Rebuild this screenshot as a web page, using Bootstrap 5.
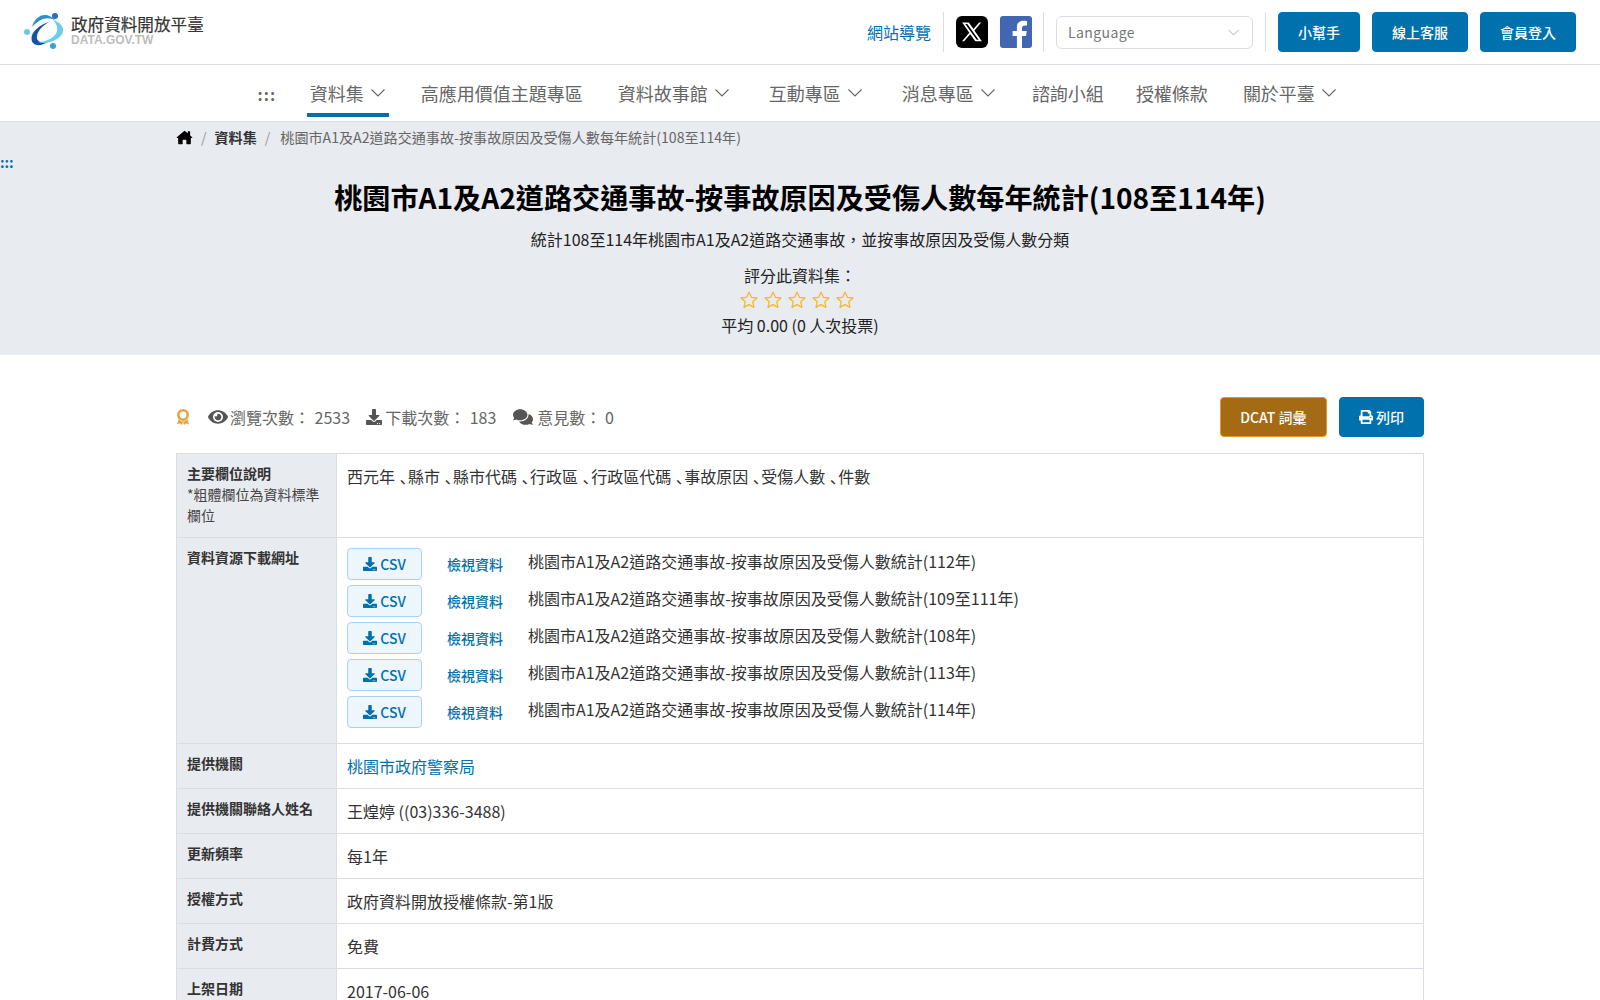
<!DOCTYPE html>
<html lang="zh-Hant">
<head>
    <meta charset="UTF-8">
    <meta name="viewport" content="width=device-width, initial-scale=1.0">
    <title>桃園市A1及A2道路交通事故-按事故原因及受傷人數每年統計(108至114年)</title>
    <link href="https://cdn.jsdelivr.net/npm/bootstrap@5.3.0/dist/css/bootstrap.min.css" rel="stylesheet">
    <style>
        body {
            font-family: "Noto Sans CJK TC", "Noto Sans", sans-serif;
            font-size: 16px;
            color: #222;
            background: #fff;
        }
        a { text-decoration: none; color: #0071ad; }
        .ico { fill: currentColor; display: inline-block; vertical-align: -2px; }

        /* top bar */
        .top-bar { height: 65px; border-bottom: 1px solid #dadde5; padding: 0 24px 0 23px; }
        .logo-box { margin-top: -3px; }
        .logo-mark { margin-right: 6px; }
        .logo-name { font-size: 16.6px; line-height: 19px; color: #333; font-weight: 400; -webkit-text-stroke: .2px #333; }
        .logo-url { font-family: "Liberation Sans", sans-serif; font-size: 12px; line-height: 13px; font-weight: 700; color: #bdbdbd; }
        .top-sep { width: 1px; height: 40px; background: #dadde5; }
        .site-guide { margin-left: 1px; margin-right: 12px; }
        .fb-link { margin-left: 8px; margin-right: 7px; }
        .lang-select {
            width: 197px; height: 33px; padding: 0 11px; margin: 0 12px; font-size: 14px; color: #777; letter-spacing: .4px;
            border-color: #dadde5;
            background-image: url("data:image/svg+xml,%3csvg xmlns='http://www.w3.org/2000/svg' viewBox='0 0 16 16'%3e%3cpath fill='none' stroke='%23aaa' stroke-width='1.2' d='M2 5l6 6 6-6'/%3e%3c/svg%3e");
            background-size: 13px 13px;
        }
        .btn-site {
            background: #0071ad; border: 1px solid #0071ad; color: #fff; font-size: 14px; font-weight: 500;
            height: 40px; padding: 0 19px; border-radius: 4px; display: inline-flex; align-items: center;
        }
        .btn-site:hover { background: #005f91; color: #fff; }

        /* main menu */
        .main-menu { height: 57px; border-bottom: 1px solid #dadde5; padding-left: 12px; }
        .menu-dots { color: #666; font-size: 16px; font-weight: 700; letter-spacing: 1px; margin-right: 16px; padding-top: 2px; }
        .menu-item { position: relative; height: 56px; padding: 15px 3px 0; margin: 0 14.5px; font-size: 18px; color: #666; white-space: nowrap; }
        .menu-item svg { margin-left: 2px; vertical-align: 0; }
        .menu-item.is-active::after { content: ""; position: absolute; left: 0; right: 0; bottom: 4px; height: 4px; background: #0071ad; }
        .menu-item.wide-gap { margin-right: 18.5px; }
        .menu-item.mid-gap { margin-right: 15.5px; }
        .menu-item.tight-gap { margin-right: 11.5px; }

        /* title band */
        .title-band { background: #e8ebf0; height: 233px; text-align: center; }
        .page-wrap { width: 1248px; margin: 0 auto; }
        .crumbs { height: 31px; font-size: 14.1px; color: #666; text-align: left; }
        .crumbs .sep { color: #999; margin: 0 8px; }
        .crumbs .sep-last { margin-right: 10px; }
        .crumbs b { color: #333; font-weight: 700; }
        .crumb-home { color: #000; }
        .skip-dots { display: block; height: 19px; line-height: 19px; text-align: left; font-size: 14px; font-weight: 700; color: #0071ad; }
        .data-title { font-size: 28.13px; line-height: 44px; font-weight: 700; color: #000; margin: 3px 0 8px; }
        .data-sub { font-size: 16px; line-height: 24px; color: #222; margin-bottom: 12px; }
        .rate-line { font-size: 16px; line-height: 24px; color: #222; }
        .star-row { height: 26px; padding: 3px 6px 0 0; }
        .star-row svg { margin: 0 2.1px; }

        /* stats */
        .stats-row { height: 40px; margin: 42px 0 16px; color: #666; font-size: 16px; }
        .stat-ico { color: #555; margin-right: 2px; }
        .stat-ico.ico-dl { margin-right: 3px; }
        .stat-ico.ico-talk { margin-right: 4px; }
        .stat-medal { margin-right: 18px; }
        .stat-gap { margin-right: 17px; }
        .stat-gap.first-gap { margin-right: 16px; }
        .stat-num { margin-left: 1px; }
        .btn-dcat { background: #a56a14; border-color: #e0992f; padding: 0 19.5px; margin-right: 4px; }
        .btn-dcat:hover { background: #8d5a10; }
        .btn-print { gap: 3px; }

        /* info table */
        .info-table { border-collapse: collapse; width: 100%; margin: 0; }
        .info-table th, .info-table td { border: 1px solid #dadde5; vertical-align: top; }
        .info-table th {
            width: 160px; background: #e8ebf0; padding: 9px 10px 11px 10px; font-size: 14px; line-height: 21px;
            font-weight: 700; color: #333;
        }
        .info-table th span { display: block; font-weight: 400; color: #444; }
        .info-table td { padding: 10px; font-size: 16px; line-height: 24px; color: #333; }
        .info-table .row-one { height: 45px; }
        .dun-mark { margin-left: 5px; }
        .res-row { height: 37px; }
        .btn-csv {
            width: 75px; height: 32px; padding: 0; background: #edf5fd; border: 1px solid #a9d3f5; color: #0071ad;
            font-size: 14px; font-weight: 500; border-radius: 4px; display: inline-flex; align-items: center; justify-content: center; gap: 3px;
        }
        .view-link { width: 81px; margin-left: 25px; font-size: 14px; font-weight: 500; padding-top: 4px; }
        .res-name { color: #333; padding-top: 1px; }
    </style>
</head>
<body>
    <svg width="0" height="0" class="position-absolute">
        <symbol id="i-download" viewBox="0 0 512 512"><path d="M216 0h80c13.3 0 24 10.7 24 24v168h87.7c17.8 0 26.7 21.5 14.1 34.1L269.7 378.3c-7.5 7.5-19.8 7.5-27.3 0L90.1 226.1c-12.6-12.6-3.7-34.1 14.1-34.1H192V24c0-13.3 10.7-24 24-24zm296 376v112c0 13.3-10.7 24-24 24H24c-13.3 0-24-10.7-24-24V376c0-13.3 10.7-24 24-24h146.7l49 49c20.1 20.1 52.5 20.1 72.6 0l49-49H488c13.3 0 24 10.7 24 24zm-124 88c0-11-9-20-20-20s-20 9-20 20 9 20 20 20 20-9 20-20zm64 0c0-11-9-20-20-20s-20 9-20 20 9 20 20 20 20-9 20-20z"/></symbol>
        <symbol id="i-eye" viewBox="0 0 576 512"><path d="M572.52 241.4C518.29 135.59 410.93 64 288 64S57.68 135.64 3.48 241.41a32.35 32.35 0 0 0 0 29.19C57.71 376.41 165.07 448 288 448s230.32-71.64 284.52-177.41a32.35 32.35 0 0 0 0-29.19zM288 400a144 144 0 1 1 144-144 143.93 143.93 0 0 1-144 144zm0-240a95.31 95.31 0 0 0-25.31 3.79 47.85 47.85 0 0 1-66.9 66.9A95.78 95.78 0 1 0 288 160z"/></symbol>
        <symbol id="i-comments" viewBox="0 0 576 512"><path d="M416 192c0-88.4-93.1-160-208-160S0 103.6 0 192c0 34.3 14.1 65.9 38 92-13.4 30.2-35.5 54.2-35.8 54.5-2.2 2.3-2.8 5.7-1.5 8.7S4.8 352 8 352c36.6 0 66.9-12.3 88.7-25 32.2 15.7 70.3 25 111.3 25 114.9 0 208-71.6 208-160zm122 220c23.9-26 38-57.7 38-92 0-66.9-53.5-124.2-129.3-148.1.9 6.6 1.3 13.3 1.3 20.1 0 105.9-107.7 192-240 192-10.8 0-21.3-.8-31.7-1.9C207.8 439.6 281.8 480 368 480c41 0 79.1-9.2 111.3-25 21.8 12.7 52.1 25 88.7 25 3.2 0 6.1-1.9 7.3-4.8 1.3-2.9.7-6.3-1.5-8.7-.3-.3-22.4-24.2-35.8-54.5z"/></symbol>
        <symbol id="i-print" viewBox="0 0 512 512"><path d="M448 192V77.25c0-8.49-3.37-16.62-9.37-22.63L393.37 9.37c-6-6-14.14-9.37-22.63-9.37H96C78.33 0 64 14.33 64 32v160c-35.35 0-64 28.65-64 64v112c0 8.84 7.16 16 16 16h48v96c0 17.67 14.33 32 32 32h320c17.67 0 32-14.33 32-32v-96h48c8.84 0 16-7.16 16-16V256c0-35.35-28.65-64-64-64zm-64 256H128v-96h256v96zm0-224H128V64h192v48c0 8.84 7.16 16 16 16h48v96zm48 72c-13.25 0-24-10.75-24-24 0-13.26 10.75-24 24-24s24 10.74 24 24c0 13.25-10.75 24-24 24z"/></symbol>
        <symbol id="i-home" viewBox="0 0 576 512"><path d="M288 28L24 250c-9 8-3 22 8 22h40v192c0 13 11 24 24 24h112c9 0 16-7 16-16V352c0-9 7-16 16-16h96c9 0 16 7 16 16v120c0 9 7 16 16 16h112c13 0 24-11 24-24V272h40c11 0 17-14 8-22l-72-61V56c0-9-7-16-16-16h-48c-9 0-16 7-16 16v52z"/></symbol>
        <symbol id="i-chev" viewBox="0 0 16 16"><path fill="none" stroke="#666" stroke-width="1.1" d="M1.5 4.5L8 11l6.5-6.5"/></symbol>
        <symbol id="i-star" viewBox="0 0 24 24"><path fill="none" stroke="#f5b92f" stroke-width="1.6" stroke-linejoin="round" d="M12 2.600l2.900 6.200 6.700.8-5 4.600 1.400 6.700-6-3.400-6 3.400 1.400-6.700-5-4.600 6.700-.8z"/></symbol>
    </svg>

    <header class="top-bar d-flex align-items-center justify-content-between">
        <a href="#" class="logo-box d-flex align-items-center">
            <svg width="42" height="38" viewBox="0 0 42 38" class="logo-mark">
                <path d="M9 15C12 3 24-2 33 9 26 4 17 6 9 15z" fill="#2b8fd0"/>
                <path d="M28 9C16 13 8 20 8.500 27 9 34 17 35 25 30 18 32 13 29 14 24 15 18 20 13 28 9z" fill="#16539f"/>
                <path d="M30 8c8 2 11 8 10 12-2 7-14 13-26 10 10 0 19-5 20-11 1-4-1-8-4-11z" fill="#6fcbea"/>
                <circle cx="32" cy="4" r="3" fill="#2a6fc0"/>
                <circle cx="4" cy="20" r="3" fill="#6fc4ea"/>
                <circle cx="30" cy="34" r="3" fill="#3aa0dc"/>
            </svg>
            <span class="d-block">
                <span class="logo-name d-block">政府資料開放平臺</span>
                <span class="logo-url d-block">DATA.GOV.TW</span>
            </span>
        </a>
        <div class="d-flex align-items-center">
            <a href="#" class="site-guide">網站導覽</a>
            <span class="top-sep"></span>
            <a href="#" class="d-block ms-2 ps-1" aria-label="X">
                <svg width="32" height="32" viewBox="0 0 32 32" class="d-block"><rect width="32" height="32" rx="6" fill="#000"/><path fill="#fff" d="M6.200 6.500h6.600l4.700 6.500 5.600-6.500h2.100l-6.800 7.900 7.500 10.900h-6.600l-5.100-7.100-6.100 7.100H6l7.300-8.500zm3.100 1.500l11.400 15.800h1.900L11.300 8z"/></svg>
            </a>
            <a href="#" class="d-block fb-link" aria-label="Facebook">
                <svg width="32" height="32" viewBox="0 0 32 32" class="d-block ms-1 me-1"><rect width="32" height="32" rx="3" fill="#4267b2"/><path fill="#fff" d="M22 32V20h4l.7-5H22v-3c0-1.500.7-2.600 2.800-2.600H27V5.100C26.200 5 24.800 4.800 23.300 4.800c-3.900 0-6.400 2.300-6.400 6.600V15h-4.300v5h4.300v12z"/></svg>
            </a>
            <span class="top-sep"></span>
            <select class="form-select lang-select" aria-label="Language">
                <option>Language</option>
            </select>
            <span class="top-sep"></span>
            <div class="d-flex gap-2 ms-2 ps-1">
                <a href="#" class="btn-site me-1">小幫手</a>
                <a href="#" class="btn-site me-1">線上客服</a>
                <a href="#" class="btn-site">會員登入</a>
            </div>
        </div>
    </header>

    <nav class="main-menu d-flex justify-content-center">
        <span class="menu-dots d-flex align-items-center">:::</span>
        <a href="#" class="menu-item is-active">資料集 <svg class="ico" width="16" height="16"><use href="#i-chev"/></svg></a>
        <a href="#" class="menu-item">高應用價值主題專區</a>
        <a href="#" class="menu-item wide-gap">資料故事館 <svg class="ico" width="16" height="16"><use href="#i-chev"/></svg></a>
        <a href="#" class="menu-item wide-gap">互動專區 <svg class="ico" width="16" height="16"><use href="#i-chev"/></svg></a>
        <a href="#" class="menu-item mid-gap">消息專區 <svg class="ico" width="16" height="16"><use href="#i-chev"/></svg></a>
        <a href="#" class="menu-item tight-gap">諮詢小組</a>
        <a href="#" class="menu-item">授權條款</a>
        <a href="#" class="menu-item">關於平臺 <svg class="ico" width="16" height="16"><use href="#i-chev"/></svg></a>
    </nav>

    <section class="title-band">
        <div class="page-wrap">
            <div class="crumbs d-flex align-items-center">
                <svg class="ico crumb-home" width="17" height="15"><use href="#i-home"/></svg>
                <span class="sep">/</span><b>資料集</b><span class="sep sep-last">/</span><span>桃園市A1及A2道路交通事故-按事故原因及受傷人數每年統計(108至114年)</span>
            </div>
        </div>
        <a href="#" class="skip-dots">:::</a>
        <h1 class="data-title">桃園市A1及A2道路交通事故-按事故原因及受傷人數每年統計(108至114年)</h1>
        <p class="data-sub">統計108至114年桃園市A1及A2道路交通事故，並按事故原因及受傷人數分類</p>
        <div class="rate-line">評分此資料集：</div>
        <div class="star-row d-flex justify-content-center">
            <svg width="20" height="20"><use href="#i-star"/></svg>
            <svg width="20" height="20"><use href="#i-star"/></svg>
            <svg width="20" height="20"><use href="#i-star"/></svg>
            <svg width="20" height="20"><use href="#i-star"/></svg>
            <svg width="20" height="20"><use href="#i-star"/></svg>
        </div>
        <div class="rate-line">平均 0.00 (0 人次投票)</div>
    </section>

    <main class="page-wrap">
        <div class="stats-row d-flex align-items-center justify-content-between">
            <div class="d-flex align-items-center">
                <svg width="14" height="16" viewBox="0 0 14 16" class="stat-medal"><circle cx="7" cy="6" r="4.700" fill="none" stroke="#e9a23b" stroke-width="2.600"/><path fill="#e9a23b" d="M2.500 10.500L1 15l3-.6L6 16l1-3 1 3 2-1.600 3 .6-1.500-4.500-3 2H5.500z"/></svg>
                <svg class="ico stat-ico" width="20" height="18"><use href="#i-eye"/></svg>
                <span class="stat-gap first-gap">瀏覽次數： <span class="stat-num">2533</span></span>
                <svg class="ico stat-ico ico-dl" width="16" height="16"><use href="#i-download"/></svg>
                <span class="stat-gap">下載次數： <span class="stat-num">183</span></span>
                <svg class="ico stat-ico ico-talk" width="20" height="18"><use href="#i-comments"/></svg>
                <span>意見數： 0</span>
            </div>
            <div class="d-flex gap-2">
                <a href="#" class="btn-site btn-dcat">DCAT 詞彙</a>
                <a href="#" class="btn-site btn-print"><svg class="ico" width="14" height="14"><use href="#i-print"/></svg>列印</a>
            </div>
        </div>

        <table class="info-table">
            <tr>
                <th>主要欄位說明<span>*粗體欄位為資料標準欄位</span></th>
                <td>西元年<span class="dun-mark">､</span>縣市<span class="dun-mark">､</span>縣市代碼<span class="dun-mark">､</span>行政區<span class="dun-mark">､</span>行政區代碼<span class="dun-mark">､</span>事故原因<span class="dun-mark">､</span>受傷人數<span class="dun-mark">､</span>件數</td>
            </tr>
            <tr>
                <th>資料資源下載網址</th>
                <td>
                    <div class="res-row d-flex">
                        <a href="#" class="btn-csv"><svg class="ico" width="14" height="14"><use href="#i-download"/></svg>CSV</a>
                        <a href="#" class="view-link">檢視資料</a>
                        <span class="res-name">桃園市A1及A2道路交通事故-按事故原因及受傷人數統計(112年)</span>
                    </div>
                    <div class="res-row d-flex">
                        <a href="#" class="btn-csv"><svg class="ico" width="14" height="14"><use href="#i-download"/></svg>CSV</a>
                        <a href="#" class="view-link">檢視資料</a>
                        <span class="res-name">桃園市A1及A2道路交通事故-按事故原因及受傷人數統計(109至111年)</span>
                    </div>
                    <div class="res-row d-flex">
                        <a href="#" class="btn-csv"><svg class="ico" width="14" height="14"><use href="#i-download"/></svg>CSV</a>
                        <a href="#" class="view-link">檢視資料</a>
                        <span class="res-name">桃園市A1及A2道路交通事故-按事故原因及受傷人數統計(108年)</span>
                    </div>
                    <div class="res-row d-flex">
                        <a href="#" class="btn-csv"><svg class="ico" width="14" height="14"><use href="#i-download"/></svg>CSV</a>
                        <a href="#" class="view-link">檢視資料</a>
                        <span class="res-name">桃園市A1及A2道路交通事故-按事故原因及受傷人數統計(113年)</span>
                    </div>
                    <div class="res-row d-flex">
                        <a href="#" class="btn-csv"><svg class="ico" width="14" height="14"><use href="#i-download"/></svg>CSV</a>
                        <a href="#" class="view-link">檢視資料</a>
                        <span class="res-name">桃園市A1及A2道路交通事故-按事故原因及受傷人數統計(114年)</span>
                    </div>
                </td>
            </tr>
            <tr class="row-one"><th>提供機關</th><td><a href="#">桃園市政府警察局</a></td></tr>
            <tr class="row-one"><th>提供機關聯絡人姓名</th><td>王煌婷 ((03)336-3488)</td></tr>
            <tr class="row-one"><th>更新頻率</th><td>每1年</td></tr>
            <tr class="row-one"><th>授權方式</th><td>政府資料開放授權條款-第1版</td></tr>
            <tr class="row-one"><th>計費方式</th><td>免費</td></tr>
            <tr class="row-one"><th>上架日期</th><td>2017-06-06</td></tr>
        </table>
    </main>

    <script src="https://cdn.jsdelivr.net/npm/bootstrap@5.3.0/dist/js/bootstrap.bundle.min.js"></script>
</body>
</html>
